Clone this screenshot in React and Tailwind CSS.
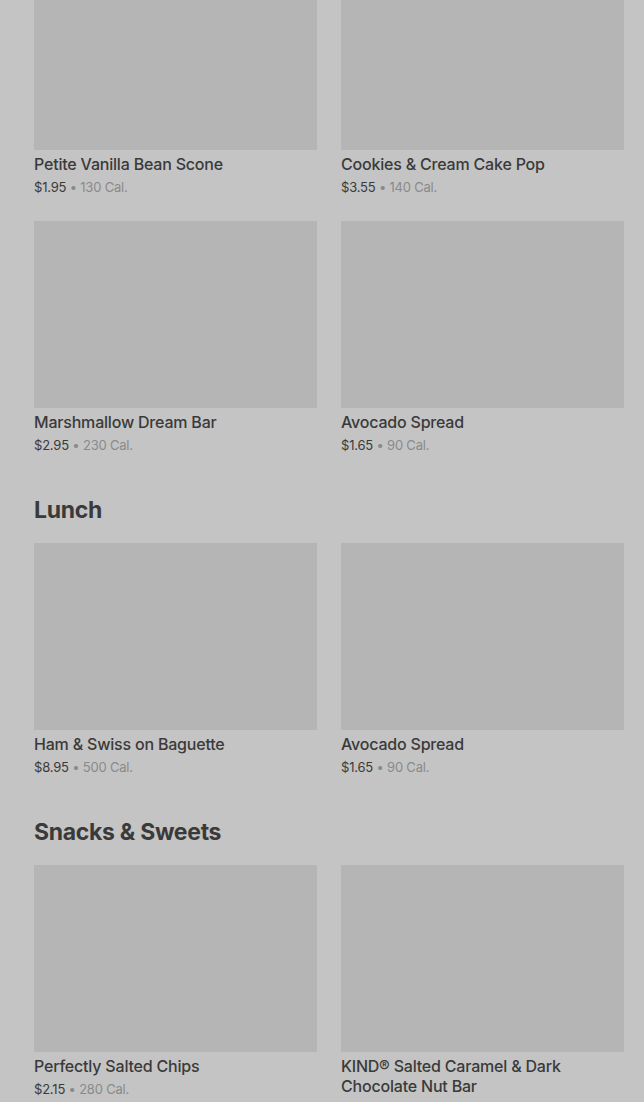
const sections = [
  {
    title: null,
    items: [
      { name: 'Petite Vanilla Bean Scone', price: '$1.95', cal: '130 Cal.' },
      { name: 'Cookies & Cream Cake Pop', price: '$3.55', cal: '140 Cal.' },
      { name: 'Marshmallow Dream Bar', price: '$2.95', cal: '230 Cal.' },
      { name: 'Avocado Spread', price: '$1.65', cal: '90 Cal.' },
    ],
  },
  {
    title: 'Lunch',
    items: [
      { name: 'Ham & Swiss on Baguette', price: '$8.95', cal: '500 Cal.' },
      { name: 'Avocado Spread', price: '$1.65', cal: '90 Cal.' },
    ],
  },
  {
    title: 'Snacks & Sweets',
    items: [
      { name: 'Perfectly Salted Chips', price: '$2.15', cal: '280 Cal.' },
      { name: 'KIND® Salted Caramel & Dark Chocolate Nut Bar', price: '$2.25', cal: '200 Cal.' },
    ],
  },
];

function ItemCard({ item }) {
  return (
    <div className="flex flex-col">
      <div className="h-[187px] bg-[#b5b5b5]" />
      <p className="mt-1 text-[16px] leading-[20px] font-medium tracking-[-0.2px] text-[#3a3a3a]">{item.name}</p>
      <p className="mt-[4px] text-[13px] leading-[18px] tracking-[-0.2px]">
        <span className="text-[#3a3a3a]">{item.price}</span>
        <span className="text-[#8a8a8a]"> • {item.cal}</span>
      </p>
    </div>
  );
}

export default function App() {
  return (
    <div
      className="min-h-screen overflow-hidden bg-[#c4c4c4] pl-[34px] pr-[20px]"
      style={{ fontFamily: 'Inter, "Liberation Sans", sans-serif' }}
    >
      <div className="-mt-[37px]">
        {sections.map((section, i) => (
          <section key={i} className={section.title ? 'mt-[42px]' : ''}>
            {section.title && (
              <h2 className="mb-[19px] text-[23px] leading-[28px] font-bold tracking-[-0.3px] text-[#3a3a3a]">
                {section.title}
              </h2>
            )}
            <div className="grid grid-cols-2 gap-x-[24px] gap-y-[25px]">
              {section.items.map((item, j) => (
                <ItemCard key={j} item={item} />
              ))}
            </div>
          </section>
        ))}
      </div>
    </div>
  );
}
